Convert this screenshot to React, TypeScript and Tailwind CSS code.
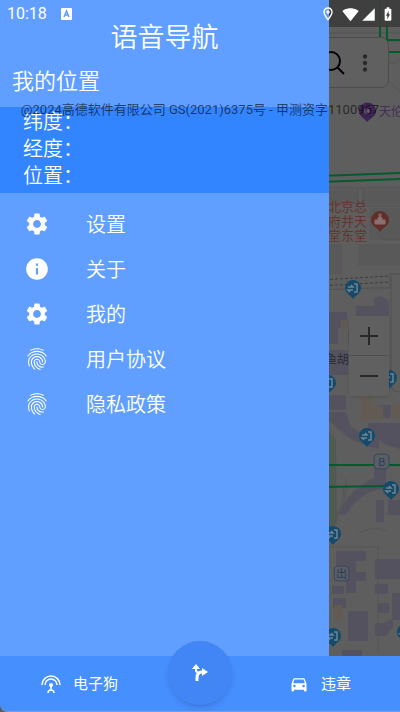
import { MdBatteryChargingFull, MdDirectionsCar, MdFingerprint, MdInfo, MdMoreVert, MdOutlineLocationOn, MdSettings, MdSignalCellular4Bar, MdSignalWifi4Bar } from "react-icons/md"

const menuItems = [
  { label: "设置", icon: MdSettings },
  { label: "关于", icon: MdInfo },
  { label: "我的", icon: MdSettings },
  { label: "用户协议", icon: MdFingerprint },
  { label: "隐私政策", icon: MdFingerprint },
]

const gates = [
  [353, 288],
  [328, 383],
  [389, 378],
  [367, 436],
  [391, 489],
  [333, 534],
  [333, 636],
  [405, 632],
]

function Gate({ x, y }: { x: number; y: number }) {
  return (
    <g transform={`translate(${x} ${y})`}>
      <path d="M0 11C-3 7-8 5-8 0a8 8 0 0 1 16 0c0 5-5 7-8 11z" fill="#154a6b" />
      <path d="M1-4h3v8H1M-5-1h5l-2-2M0 2h-5l2 2" fill="none" stroke="#6f8590" strokeWidth="1.5" />
    </g>
  )
}

function CityMap() {
  return (
    <svg className="absolute inset-0 h-full w-full" viewBox="0 0 400 712" preserveAspectRatio="xMaxYMin slice" aria-hidden="true">
      <rect width="400" height="712" fill="#5e5e5e" />
      <path d="M320 33h80M380 37v35l20 20M385 41h15M388 62q8 3 12-3" fill="none" stroke="#525252" />
      <path d="M380 0v38M387 0v40h13M389 52h11" fill="none" stroke="#075a2c" strokeWidth="2" />
      <path d="M320 190h38v15h-38zM363 190h37v14h-37zM369 208h31v32h-31zM320 244h22v30h-22zM358 244h42v22h-42z" fill="#595959" />
      <path d="M320 188h80M358 189v17M363 189v17h37M381 234q0 6 5 6h14" fill="none" stroke="#525259" />
      <path d="M320 176l80-3M320 182l80-3" fill="none" stroke="#075a2c" strokeWidth="2" />
      <path d="M320 280l70-4M320 286l70-4" fill="none" stroke="#3d3d3d" strokeDasharray="3 2" />
      <path d="M320 290l50-2h20v-14h10M391 276v108q0 8 9 8" fill="none" stroke="#515151" />
      <g fill="#54525e">
        <path d="M328 312h19v16h-9v16h-10zM348 330h13v14h-13zM356 306h18v-8l7-2 8 5v15h-33zM328 350h20v25h-20zM328 395h18v15h-18zM328 412h18l5 15 18 11 10 2v9l-10-2-20-9-21-18z" />
        <path d="M378 405h13v13h-13zM368 423h32v26l-14-4-18-12zM338 514c10-20 22-30 36-36v-16l12 3v24c-20 0-34 15-40 26zM376 500h8v22h-8zM388 500h12v15h-12z" />
        <path d="M336 551h30v10h-10v11h10v9h-30zM375 559h25v20h-25zM332 586h12v8h-12zM346 581h10v12h-10zM333 598h13v10h-13zM348 611h20v30h-20zM375 584h13v10h-13zM377 603h12v10h-12zM392 593h8v27h-8zM375 623h9l9-4v8l-7 9h-11zM342 650h20v6h-20z" />
      </g>
      <path d="M341 320h7v9h-7zM361 397h12v9h10v13h-22zM392 405h8v13h-8zM334 605h8v16h-8z" fill="#625b53" />
      <path d="M328 430l8 10 1 82-9 12z" fill="#4f5a52" />
      <path d="M344 485c0 20-6 24-8 37M346 478c1 17-4 28-3 37M358 534q14-9 29-3M380 517q5-5 20-8M328 547h50M378 547v105" fill="none" stroke="#555" />
      <path d="M320 465h80M320 487l70-1" stroke="#075a2c" strokeWidth="2" />
      {gates.map(([x, y]) => (
        <Gate key={`${x}-${y}`} x={x} y={y} />
      ))}
      <path d="M367 122c-3-4-8-6-8-11a8 8 0 0 1 17 0c0 5-5 7-9 11z" fill="#3c2351" />
      <circle cx="367" cy="111" r="3" fill="#6a5a76" />
      <path d="M380 232c-3-5-9-6-9-12a9 9 0 0 1 18 0c0 6-6 7-9 12z" fill="#602f29" />
      <path d="M380 213v4M378 215h4M375 224v-4h3v-2l2-2 2 2v2h3v4z" fill="#8a716d" stroke="#8a716d" />
      <g fontFamily="'Noto Sans CJK SC', sans-serif">
        <text x="379" y="116" fontSize="12" fill="#452d58">天伦</text>
        <g fontSize="13" fill="#63352f">
          <text x="328" y="211">北京总</text>
          <text x="328" y="226">府井天</text>
          <text x="328" y="240">堂东堂</text>
        </g>
        <text x="325" y="364" fontSize="12" fill="#292d33">鱼胡</text>
        <g fill="#5b5d61" stroke="#344664">
          <rect x="374" y="454" width="15" height="15" rx="4" />
          <rect x="334" y="566" width="15" height="15" rx="4" />
        </g>
        <text x="378" y="466" fontSize="11" fill="#243c62">B</text>
        <text x="336" y="578" fontSize="11" fill="#243c62">出</text>
      </g>
    </svg>
  )
}

function StatusBar() {
  return (
    <div className="absolute inset-x-0 top-0 z-30 flex h-7 items-center pr-1 pl-[7px] text-white">
      <span className="font-[Roboto,sans-serif] text-base">10:18</span>
      <svg className="ml-3.5 h-3 w-3" viewBox="0 0 12 12" aria-hidden="true">
        <rect width="11" height="12" rx="1" fill="#fff" />
        <path d="M3 9l2.500-6L8 9M4 7h3" fill="none" stroke="#609fff" strokeWidth="1.500" />
      </svg>
      <div className="ml-auto flex items-center">
        <MdOutlineLocationOn className="mr-1.5 size-4" />
        <MdSignalWifi4Bar className="mr-0.5 size-[17px]" />
        <MdSignalCellular4Bar className="mr-1 size-[15px]" />
        <MdBatteryChargingFull className="size-4" />
      </div>
    </div>
  )
}

function Drawer() {
  return (
    <aside className="relative z-10 flex w-[82.2%] grow flex-col bg-[#609fff] font-[350] text-white">
      <h1 className="pt-4 text-center text-[27px] leading-10">语音导航</h1>
      <h2 className="px-3 pt-1.5 pb-[11px] text-[22px] leading-[34px]">我的位置</h2>
      <dl className="bg-[#3385ff] px-[23px] pb-[5px] text-xl leading-[27px]">
        <dt>纬度：</dt>
        <dt>经度：</dt>
        <dt>位置：</dt>
      </dl>
      <nav className="flex flex-col pt-2">
        {menuItems.map(({ label, icon: Icon }) => (
          <button key={label} type="button" className="flex h-[45px] items-center gap-9 pl-6 text-left text-xl">
            <Icon className="size-[26px]" />
            {label}
          </button>
        ))}
      </nav>
    </aside>
  )
}

function MapControls() {
  return (
    <>
      <div className="absolute top-[37px] right-[11px] left-3 flex h-[51px] items-center justify-end gap-1.5 rounded-lg border border-[#4c4c4c] bg-[#606060] pr-2.5">
        <button type="button" aria-label="搜索" className="text-black">
          <svg className="size-7" viewBox="0 0 28 28" fill="none" stroke="currentColor" strokeWidth="2">
            <circle cx="13" cy="12" r="9" />
            <path d="M19 18l7 7" />
          </svg>
        </button>
        <button type="button" aria-label="更多" className="text-[#292929]">
          <MdMoreVert className="size-[26px]" />
        </button>
      </div>
      <div className="absolute top-[316px] right-[11px] flex w-10 flex-col divide-y divide-[#505050] rounded-xs bg-[#606060] text-[#292929] shadow">
        <button type="button" aria-label="放大" className="flex h-10 items-center justify-center">
          <svg className="size-5" viewBox="0 0 20 20" stroke="currentColor" strokeWidth="2">
            <path d="M1 10h18M10 1v18" />
          </svg>
        </button>
        <button type="button" aria-label="缩小" className="flex h-10 items-center justify-center">
          <svg className="size-5" viewBox="0 0 20 20" stroke="currentColor" strokeWidth="2">
            <path d="M1 10h18" />
          </svg>
        </button>
      </div>
    </>
  )
}

function BottomBar() {
  return (
    <footer className="relative z-20 grid h-14 grid-cols-2 rounded-bl-lg border-b border-[#7d9fc9] bg-[#468fff] text-[15px] text-white">
      <button type="button" className="flex items-center gap-3 pl-[41px]">
        <svg className="size-5" viewBox="0 0 20 20" fill="none" stroke="currentColor" strokeWidth="1.500" aria-hidden="true">
          <path d="M1 11a9 9 0 0 1 18 0M4 11a6 6 0 0 1 12 0M10 11v5M7 19c0-2 1-3 3-3s3 1 3 3" />
          <circle cx="10" cy="11" r="2" fill="currentColor" stroke="none" />
        </svg>
        电子狗
      </button>
      <button type="button" className="flex items-center justify-end gap-3 pr-[49px]">
        <MdDirectionsCar className="size-5" />
        违章
      </button>
      <button type="button" aria-label="导航" className="absolute -top-[15px] left-1/2 flex size-16 -translate-x-1/2 items-center justify-center rounded-full bg-[#4285f4] shadow-md">
        <svg className="size-5" viewBox="0 0 20 20" fill="none" stroke="currentColor" aria-hidden="true">
          <path d="M7 18v-3c0-4 2-6 5-6h1" strokeWidth="3" />
          <path d="M6 4v4l2 2" strokeWidth="2" />
          <path d="M12 5l6 4-6 4zM6 1L2 6h8z" fill="currentColor" stroke="none" />
        </svg>
      </button>
    </footer>
  )
}

export default function App() {
  return (
    <main className="relative flex min-h-screen flex-col overflow-hidden bg-[#5e5e5e] font-['Noto_Sans_CJK_SC',sans-serif]">
      <CityMap />
      <div className="absolute inset-x-0 top-0 h-[27px] bg-[#3c3c3c]/90" />
      <MapControls />
      <StatusBar />
      <Drawer />
      <p className="absolute inset-x-0 top-[100px] z-20 text-center font-[Roboto,'Noto_Sans_CJK_SC',sans-serif] text-[13px] leading-5 whitespace-nowrap text-black/60">
        @2024高德软件有限公司 GS(2021)6375号 - 甲测资字1100967
      </p>
      <BottomBar />
    </main>
  )
}
